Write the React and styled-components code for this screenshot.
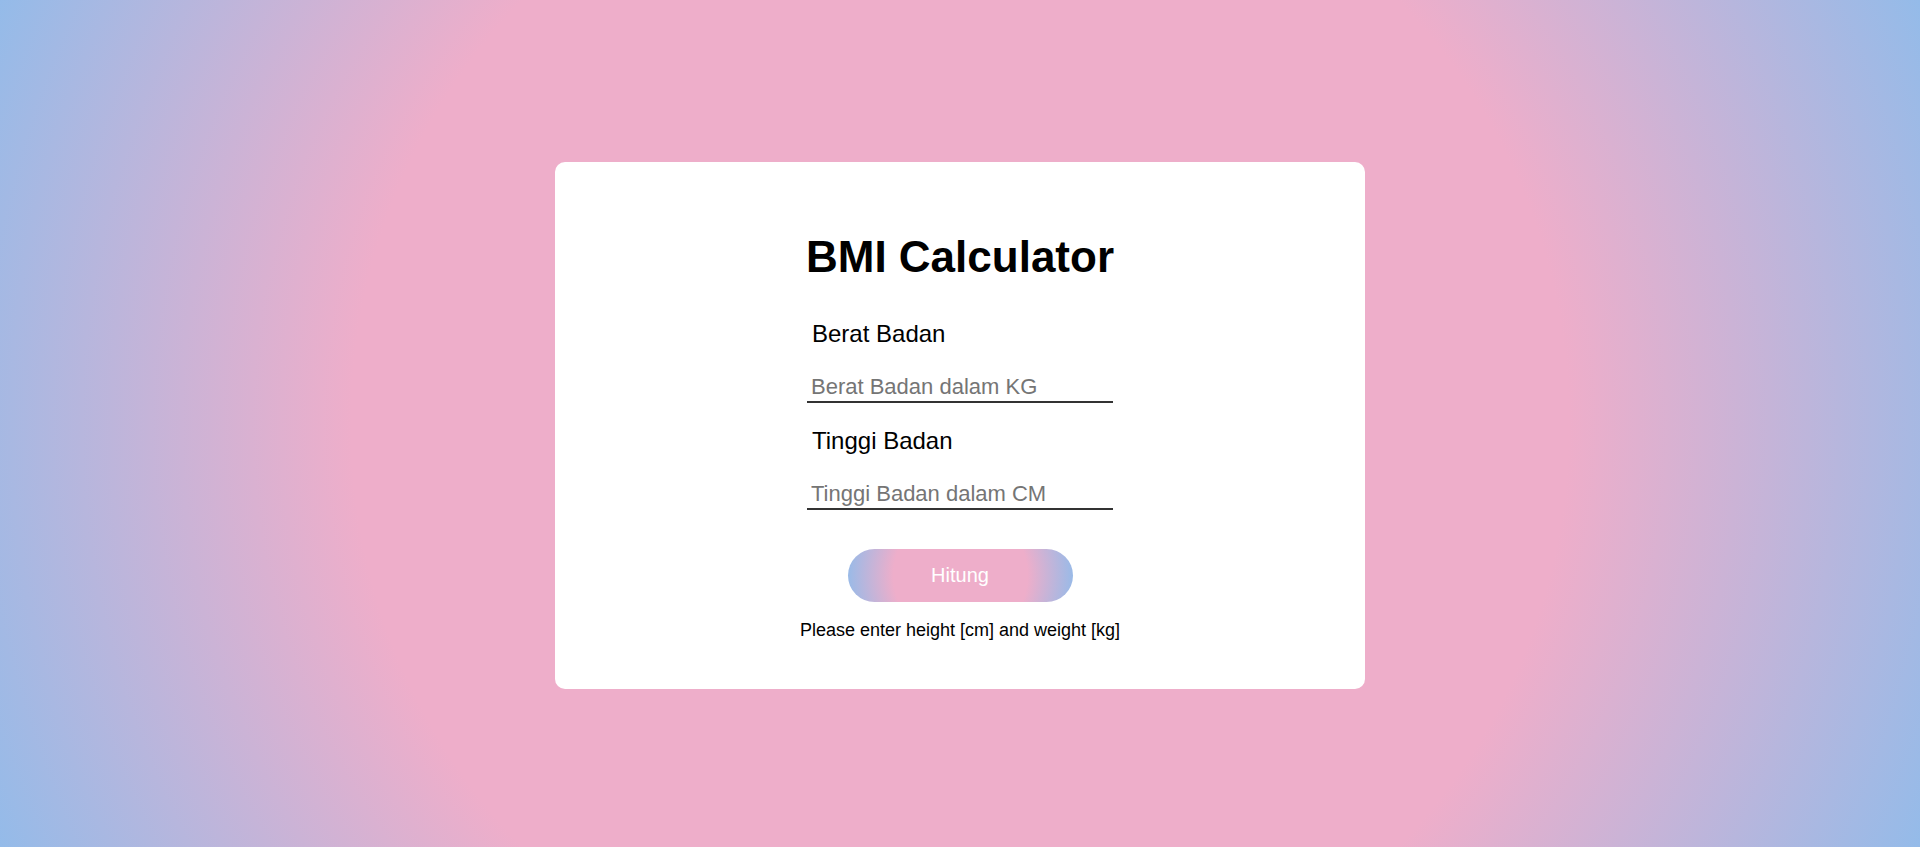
import styled, { createGlobalStyle } from 'styled-components';

const pinkBlue = 'radial-gradient(circle, #eeaeca 58%, #94bbe9 100%)';

const GlobalStyle = createGlobalStyle`
   * {
      box-sizing: border-box;
   }

   html,
   body {
      margin: 0;
      padding: 0;
   }

   body {
      font-family: 'Liberation Sans', Arial, sans-serif;
   }
`;

const Page = styled.main`
   min-height: 100vh;
   display: flex;
   align-items: center;
   justify-content: center;
   padding-top: 3px;
   background: ${pinkBlue};
`;

const Card = styled.section`
   width: 810px;
   background: #fff;
   border-radius: 10px;
   padding: 70px 0 48px;
   display: flex;
   flex-direction: column;
   align-items: center;
`;

const Title = styled.h1`
   margin: 0 0 38px;
   font-size: 44px;
   line-height: 50px;
   font-weight: 700;
   color: #000;
`;

const Form = styled.form`
   width: 306px;
   display: flex;
   flex-direction: column;
`;

const Field = styled.div`
   display: flex;
   flex-direction: column;
   margin-bottom: ${({ last }) => (last ? '39px' : '24px')};
`;

const Label = styled.label`
   margin: 0 0 24px 5px;
   font-size: 24px;
   line-height: 28px;
   color: #000;
`;

const Input = styled.input`
   width: 100%;
   padding: 2px 4px 1px;
   border: none;
   border-bottom: 2px solid #333;
   outline: none;
   background: transparent;
   font-family: inherit;
   font-size: 22px;
   line-height: 26px;
   color: #000;

   &::placeholder {
      color: #757575;
   }
`;

const Button = styled.button`
   align-self: center;
   width: 225px;
   height: 53px;
   border: none;
   border-radius: 27px;
   background: ${pinkBlue};
   color: #fff;
   font-family: inherit;
   font-size: 20px;
   cursor: pointer;
`;

const Status = styled.p`
   margin: 18px 0 0;
   font-size: 18px;
   line-height: 21px;
   color: #000;
   text-align: center;
`;

const App = () => {
   return (
      <>
         <GlobalStyle />
         <Page>
            <Card>
               <Title>BMI Calculator</Title>
               <Form onSubmit={(e) => e.preventDefault()}>
                  <Field>
                     <Label htmlFor="berat">Berat Badan</Label>
                     <Input id="berat" type="text" placeholder="Berat Badan dalam KG" />
                  </Field>
                  <Field last>
                     <Label htmlFor="tinggi">Tinggi Badan</Label>
                     <Input id="tinggi" type="text" placeholder="Tinggi Badan dalam CM" />
                  </Field>
                  <Button type="submit">Hitung</Button>
               </Form>
               <Status>Please enter height [cm] and weight [kg]</Status>
            </Card>
         </Page>
      </>
   );
};

export default App;
